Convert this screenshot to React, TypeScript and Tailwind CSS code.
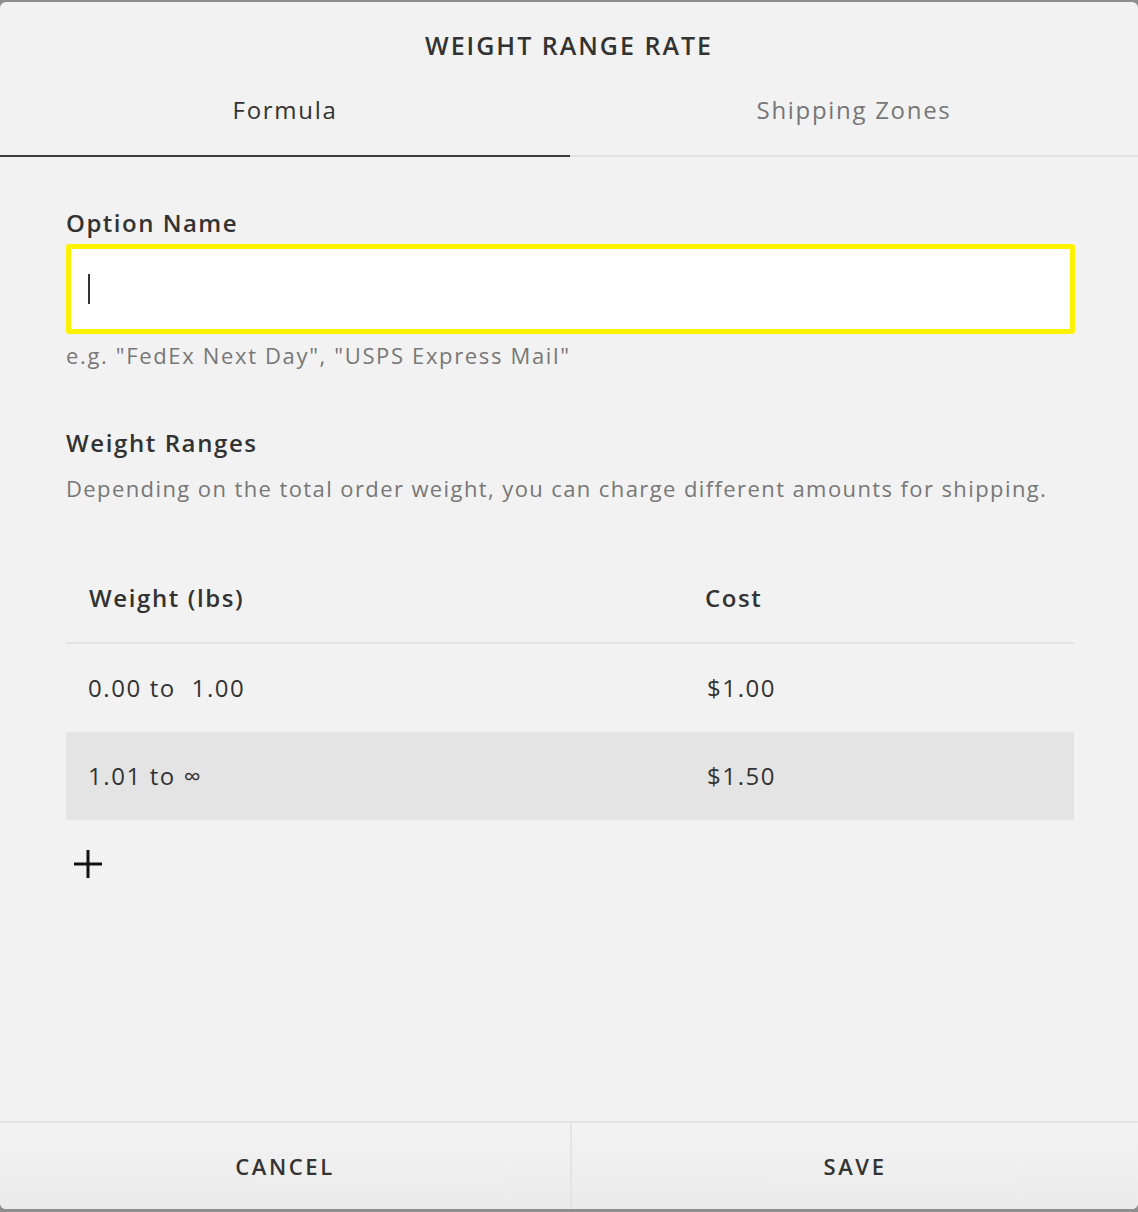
const rows = [
  { range: "0.00 to  1.00", cost: "$1.00", shaded: false },
  { range: "1.01 to ∞", cost: "$1.50", shaded: true },
];

const Tab = ({ label, active }: { label: string; active?: boolean }) => (
  <button
    className={
      active
        ? "w-[570px] h-[97px] pt-[5px] flex items-center justify-center border-b-2 border-[#3c3c3c] text-[#333]"
        : "flex-1 h-[97px] pt-[5px] flex items-center justify-center border-b-2 border-[#e2e2e2] text-[#777]"
    }
  >
    {label}
  </button>
);

export default function App() {
  return (
    <div
      className="h-[1212px] bg-[#8e8e8e] pt-[2px] pb-[3px]"
      style={{ fontFamily: "'Open Sans', 'Liberation Sans', sans-serif" }}
    >
      <div className="h-full rounded-[6px] bg-[#f2f2f2] flex flex-col overflow-hidden">
        {/* header */}
        <h1 className="pt-[28px] text-center text-[25px] font-semibold tracking-[2px] text-[#333] leading-[30px]">
          WEIGHT RANGE RATE
        </h1>
        <div className="flex text-[24px] tracking-[1.7px]">
          <Tab label="Formula" active />
          <Tab label="Shipping Zones" />
        </div>

        {/* body */}
        <div className="flex-1 pl-[66px] pr-[63px] pt-[51px]">
          <label className="block text-[24px] tracking-[1.5px] font-semibold text-[#333] leading-[30px]">
            Option Name
          </label>
          <div className="mt-[6px] h-[90px] rounded-[3px] border-[5px] border-[#fff200] bg-white flex items-center pl-[17px]">
            <span className="block w-[2px] h-[30px] bg-[#333]" />
          </div>
          <p className="mt-[8px] text-[22px] tracking-[1.65px] text-[#777] leading-[26px]">
            e.g. "FedEx Next Day", "USPS Express Mail"
          </p>

          <h2 className="mt-[60px] text-[24px] tracking-[1.6px] font-semibold text-[#333] leading-[30px]">
            Weight Ranges
          </h2>
          <p className="mt-[17px] text-[22px] tracking-[1.4px] text-[#777] leading-[26px]">
            Depending on the total order weight, you can charge different amounts for shipping.
          </p>

          <div className="mt-[53px] mr-[1px] text-[24px] tracking-[1.6px] text-[#333]">
            <div className="grid grid-cols-[616px_1fr] h-[90px] items-center border-b-2 border-[#e4e4e4] px-[23px] font-semibold">
              <span>Weight (lbs)</span>
              <span>Cost</span>
            </div>
            {rows.map((row) => (
              <div
                key={row.cost}
                className={
                  row.shaded
                    ? "grid grid-cols-[619px_1fr] h-[88px] items-center px-[22px] bg-[#e4e4e4]"
                    : "grid grid-cols-[619px_1fr] h-[88px] items-center px-[22px]"
                }
              >
                <span className="whitespace-pre">{row.range}</span>
                <span>{row.cost}</span>
              </div>
            ))}
          </div>
          <button className="mt-[30px] ml-[8px] block">
            <svg width="28" height="28" viewBox="0 0 28 28">
              <path d="M14 0v28M0 14h28" stroke="#111" strokeWidth="3" />
            </svg>
          </button>
        </div>

        {/* footer */}
        <div className="h-[88px] flex border-t-2 border-[#e4e4e4] bg-gradient-to-b from-[#f3f3f3] to-[#ebebeb] text-[22px] font-semibold tracking-[2.6px] text-[#333]">
          <button className="w-[570px]">CANCEL</button>
          <div className="w-[2px] bg-[#e4e4e4]" />
          <button className="flex-1">SAVE</button>
        </div>
      </div>
    </div>
  );
}
